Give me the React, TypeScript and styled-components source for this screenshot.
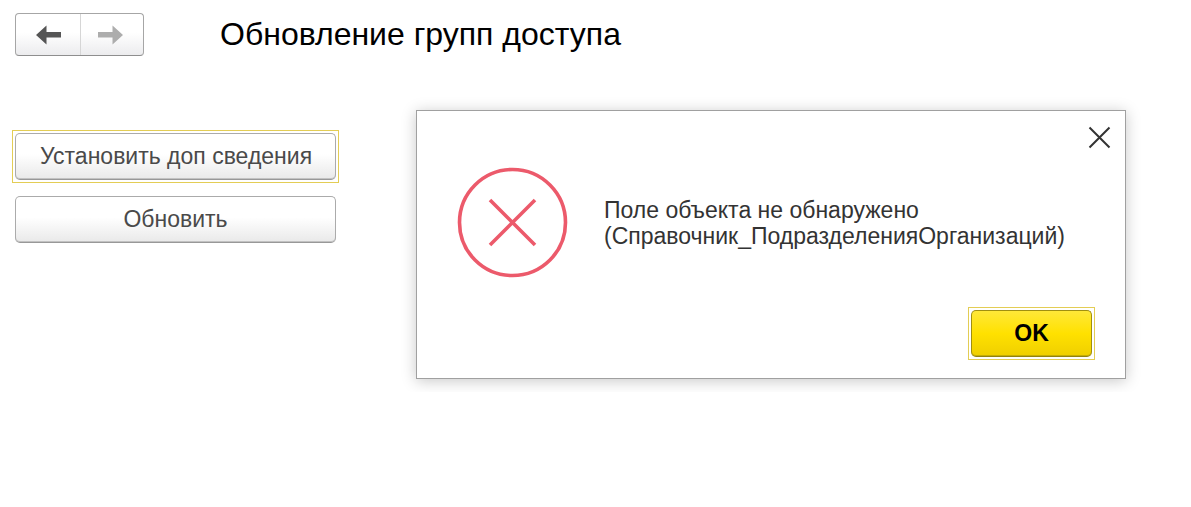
import React from "react";
import styled, { createGlobalStyle } from "styled-components";

const GlobalStyle = createGlobalStyle`
  * {
    box-sizing: border-box;
  }
  body {
    margin: 0;
    background: #ffffff;
    font-family: "Liberation Sans", Arial, sans-serif;
  }
`;

const Page = styled.div`
  padding: 13px 15px;
`;

const Header = styled.header`
  display: flex;
  align-items: center;
  gap: 76px;
`;

const History = styled.nav`
  display: grid;
  flex: none;
  grid-template-columns: 64px 63px;
  height: 43px;
  border: 1px solid #a6a6a6;
  border-bottom-color: #8e8e8e;
  border-radius: 4px;
  background: linear-gradient(#ffffff 45%, #ececee);
`;

const HistoryButton = styled.button`
  display: flex;
  align-items: center;
  justify-content: center;
  padding: 0;
  border: 0;
  background: transparent;
  color: #555555;

  & + & {
    padding-right: 4px;
    border-left: 1px solid #d6d6d6;
  }
  &:disabled {
    color: #adadad;
  }
`;

const Title = styled.h1`
  margin: 0;
  color: #000000;
  font-size: 32px;
  font-weight: 400;
  line-height: 43px;
`;

const Main = styled.main`
  display: flex;
  align-items: flex-start;
  gap: 80px;
  margin-top: 54px;
  padding-right: 50px;
`;

const Commands = styled.div`
  display: flex;
  flex: none;
  flex-direction: column;
  gap: 16px;
  width: 321px;
  padding-top: 23px;
`;

const Button = styled.button<{ $primary?: boolean; $focused?: boolean }>`
  position: relative;
  height: 47px;
  padding: 0 24px;
  border: 1px solid ${(p) => (p.$primary ? "#a08f10" : "#ababab")};
  border-bottom-color: ${(p) => (p.$primary ? "#91820f" : "#989898")};
  border-radius: 5px;
  background: ${(p) =>
    p.$primary
      ? "linear-gradient(#ffe838, #ffe100 50%, #efcf00)"
      : "linear-gradient(#ffffff 45%, #e9e9e9)"};
  box-shadow: inset 0 -1px 0 ${(p) => (p.$primary ? "#c4ac08" : "#c2c2c2")};
  outline: none;
  color: ${(p) => (p.$primary ? "#000000" : "#4a4a4a")};
  font-family: inherit;
  font-size: 23px;
  font-weight: ${(p) => (p.$primary ? 700 : 400)};
  white-space: nowrap;

  &::after {
    content: "";
    display: ${(p) => (p.$focused ? "block" : "none")};
    position: absolute;
    inset: -4px;
    border: 1px solid #e3cd55;
    pointer-events: none;
  }
`;

const Dialog = styled.section`
  display: flex;
  flex: 1;
  flex-direction: column;
  height: 269px;
  border: 1px solid #a0a0a0;
  background: #ffffff;
  box-shadow: 0 2px 14px rgba(0, 0, 0, 0.22);
`;

const DialogTop = styled.div`
  display: flex;
  justify-content: flex-end;
  padding: 15px 14px 0 0;
`;

const CloseButton = styled.button`
  display: flex;
  padding: 0;
  border: 0;
  background: transparent;
  color: #333333;
`;

const DialogBody = styled.div`
  display: flex;
  align-items: center;
  gap: 36px;
  padding: 17px 40px 0;
`;

const Message = styled.p`
  margin: 0;
  color: #333333;
  font-size: 23px;
  line-height: 26px;
`;

const DialogActions = styled.div`
  display: grid;
  grid-template-columns: 121px;
  justify-content: end;
  margin-top: auto;
  padding: 0 33px 21px 0;
`;

const ErrorIcon = styled.svg`
  flex: none;
`;

function Arrow({ forward }: { forward?: boolean }) {
  return (
    <svg width="25" height="20" viewBox="0 0 25 20" aria-hidden="true">
      <path
        d={
          forward
            ? "M0 7h14.5V0.5L25 10 14.5 19.5V12.5H0z"
            : "M25 7H10.5V0.5L0 10l10.5 9.5V12.5H25z"
        }
        fill="currentColor"
      />
    </svg>
  );
}

export default function App() {
  return (
    <>
      <GlobalStyle />
      <Page>
        <Header>
          <History aria-label="История">
            <HistoryButton type="button" aria-label="Назад">
              <Arrow />
            </HistoryButton>
            <HistoryButton type="button" aria-label="Вперед" disabled>
              <Arrow forward />
            </HistoryButton>
          </History>
          <Title>Обновление групп доступа</Title>
        </Header>
        <Main>
          <Commands>
            <Button type="button" $focused>
              Установить доп сведения
            </Button>
            <Button type="button">Обновить</Button>
          </Commands>
          <Dialog role="alertdialog" aria-describedby="error-message">
            <DialogTop>
              <CloseButton type="button" aria-label="Закрыть">
                <svg width="24" height="24" viewBox="0 0 24 24" aria-hidden="true">
                  <path d="M2.5 1.5l20 20M22.5 1.5l-20 20" stroke="currentColor" strokeWidth="2" />
                </svg>
              </CloseButton>
            </DialogTop>
            <DialogBody>
              <ErrorIcon width="111" height="111" viewBox="0 0 111 111" aria-hidden="true">
                <g fill="none" stroke="#ec5a6b" strokeWidth="3.6">
                  <circle cx="55.5" cy="55.5" r="53" />
                  <path d="M33 33l45 45M78 33L33 78" />
                </g>
              </ErrorIcon>
              <Message id="error-message">
                Поле объекта не обнаружено
                <br />
                (Справочник_ПодразделенияОрганизаций)
              </Message>
            </DialogBody>
            <DialogActions>
              <Button type="button" $primary $focused>
                OK
              </Button>
            </DialogActions>
          </Dialog>
        </Main>
      </Page>
    </>
  );
}
